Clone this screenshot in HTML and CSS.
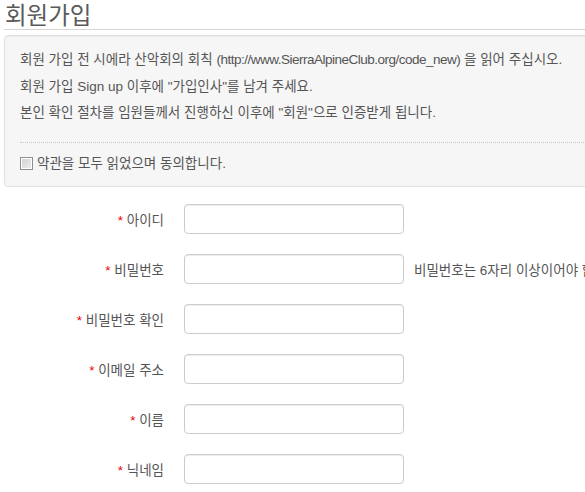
FILE: index.html
```html
<!DOCTYPE html>
<html lang="ko">
<head>
<meta charset="utf-8">
<title>회원가입</title>
<link rel="stylesheet" href="styles.css">
</head>
<body>
<div class="page">
  <h1 class="title">회원가입</h1>
  <div class="well">
    <p>회원 가입 전 시에라 산악회의 회칙 <span class="url">(http://www.SierraAlpineClub.org/code_new)</span> 을 읽어 주십시오.</p>
    <p>회원 가입 Sign up 이후에 "가입인사"를 남겨 주세요.</p>
    <p>본인 확인 절차를 임원들께서 진행하신 이후에 "회원"으로 인증받게 됩니다.</p>
    <hr class="dots">
    <label class="agree"><span class="cb"></span>약관을 모두 읽었으며 동의합니다.</label>
  </div>
  <form class="form">
    <div class="row">
      <label class="lbl"><span class="req">*</span> 아이디</label>
      <input class="inp" type="text">
    </div>
    <div class="row">
      <label class="lbl"><span class="req">*</span> 비밀번호</label>
      <input class="inp" type="password">
      <span class="help">비밀번호는 6자리 이상이어야 합니다.</span>
    </div>
    <div class="row">
      <label class="lbl"><span class="req">*</span> 비밀번호 확인</label>
      <input class="inp" type="password">
    </div>
    <div class="row">
      <label class="lbl"><span class="req">*</span> 이메일 주소</label>
      <input class="inp" type="text">
    </div>
    <div class="row">
      <label class="lbl"><span class="req">*</span> 이름</label>
      <input class="inp" type="text">
    </div>
    <div class="row">
      <label class="lbl"><span class="req">*</span> 닉네임</label>
      <input class="inp" type="text">
    </div>
  </form>
</div>
</body>
</html>
```

FILE: styles.css
```css
html, body {
  margin: 0;
  padding: 0;
  overflow: hidden;
  background: #fff;
}
body {
  font-family: "Liberation Sans", "Noto Sans CJK KR", sans-serif;
  font-size: 13.5px;
  color: #555;
}
.page {
  width: 940px;
  padding-left: 4px;
}
.title {
  margin: 0;
  padding-left: 1px;
  font-family: "Noto Sans CJK KR", sans-serif;
  font-size: 23.5px;
  font-weight: normal;
  line-height: 29px;
  color: #5a5a5a;
  border-bottom: 1px solid #d5d5d5;
}
.well {
  margin-top: 5px;
  padding: 14px 15px 16px;
  background: #f6f6f6;
  border: 1px solid #e0e0e0;
  border-radius: 4px;
  box-shadow: inset 0 1px 1px rgba(0,0,0,0.04);
}
.well p {
  margin: 0 0 6.5px;
  line-height: 20px;
}
.well p:last-of-type {
  margin-bottom: 0;
}
.url {
  letter-spacing: -0.5px;
}
.dots {
  margin: 19px 0 14px;
  height: 0;
  border: 0;
  border-top: 1px dotted #c8c8c8;
}
.agree {
  display: flex;
  align-items: center;
  height: 13px;
  line-height: 13px;
}
.cb {
  box-sizing: border-box;
  width: 13px;
  height: 13px;
  margin-right: 4px;
  border: 1px solid #8e8f8f;
  background: linear-gradient(135deg, #d0d0d0, #f0f0f0);
  box-shadow: inset 0 0 0 1px #fff;
}
.form {
  margin-top: 17px;
}
.row {
  display: flex;
  align-items: center;
  height: 30px;
  margin-bottom: 20px;
}
.lbl {
  width: 160px;
  margin-right: 20px;
  text-align: right;
}
.req {
  color: #e00;
}
.inp {
  box-sizing: border-box;
  width: 220px;
  height: 30px;
  margin: 0;
  padding: 4px 6px;
  border: 1px solid #ccc;
  border-radius: 4px;
  background: #fff;
  box-shadow: inset 0 1px 1px rgba(0,0,0,0.075);
  font: inherit;
}
.help {
  margin-left: 10px;
  white-space: nowrap;
}
```
